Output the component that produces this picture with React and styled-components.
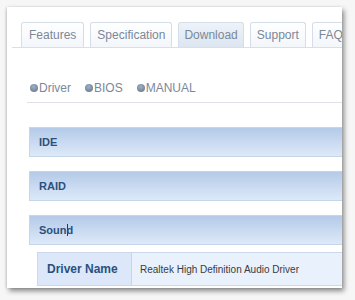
import React from "react";
import styled, { createGlobalStyle } from "styled-components";

const Global = createGlobalStyle`
  html, body { margin: 0; padding: 0; background: #f6f6f6; }
  body { font-family: "Liberation Sans", Arial, sans-serif; }
`;

const Stage = styled.div`
  width: 355px;
  height: 300px;
  padding: 7px 13px 0 7px;
  box-sizing: border-box;
  overflow: hidden;
  background: #f6f6f6;
`;

const Panel = styled.div`
  width: 335px;
  height: 281px;
  background: #fff;
  overflow: hidden;
  box-shadow: 2px 3px 5px rgba(0, 0, 0, 0.45), -1px 0 2px rgba(0, 0, 0, 0.12);
  padding: 15px 0 0 5px;
  box-sizing: border-box;
`;

const TabBar = styled.div`
  display: flex;
  gap: 6px;
  padding-left: 9px;
  border-bottom: 1px solid #d7e0ea;
  white-space: nowrap;
`;

const Tab = styled.div`
  flex: none;
  height: 24px;
  line-height: 24px;
  padding: 0 ${(p) => p.$pad}px;
  font-size: 12px;
  color: #7b8898;
  border: 1px solid #d5dde8;
  border-bottom: none;
  border-radius: 3px 3px 0 0;
  background: ${(p) =>
    p.$active
      ? "linear-gradient(#eef3f9, #dce5f0)"
      : "linear-gradient(#ffffff, #f3f6fa)"};
`;

const Links = styled.div`
  display: flex;
  gap: 14px;
  margin: 33px 0 0 15px;
  padding: 0 0 7px 3px;
  border-bottom: 1px solid #dfe3e8;
`;

const LinkItem = styled.span`
  display: flex;
  align-items: center;
  font-size: 12px;
  line-height: 14px;
  color: #7b8898;
`;

const Dot = styled.span`
  width: 8px;
  height: 8px;
  border-radius: 50%;
  background: radial-gradient(circle at 45% 35%, #9fb0c2, #5f7287);
  margin-right: 1px;
`;

const Sections = styled.div`
  margin: 24px 0 0 17px;
  display: flex;
  flex-direction: column;
  gap: 14px;
`;

const Bar = styled.div`
  height: 28px;
  display: flex;
  align-items: center;
  padding-left: 9px;
  font-size: 11px;
  font-weight: bold;
  color: #2b507d;
  border: 1px solid #c5d5ea;
  border-right: none;
  background: linear-gradient(#b4cae8, #dde9f9);
`;

const Caret = styled.span`
  display: inline-block;
  width: 1px;
  height: 12px;
  background: #2b3c50;
  vertical-align: -2px;
  margin-right: -1px;
`;

const SoundBlock = styled.div`
  display: flex;
  flex-direction: column;
`;

const Row = styled.div`
  display: flex;
  margin: 7px 0 0 8px;
  height: 32px;
  border: 1px solid #ccd9ea;
  border-right: none;
`;

const Label = styled.div`
  width: 94px;
  display: flex;
  align-items: center;
  padding-left: 9px;
  box-sizing: border-box;
  font-size: 12px;
  font-weight: bold;
  color: #2b507d;
  background: #dce8f9;
  border-right: 1px solid #c6d5e8;
`;

const Value = styled.div`
  flex: 1;
  display: flex;
  align-items: center;
  padding-left: 8px;
  font-size: 10px;
  color: #3b3b3b;
  background: #e9f1fc;
`;

export default function App() {
  const tabs = [
    { t: "Features", pad: 7 },
    { t: "Specification", pad: 6 },
    { t: "Download", pad: 5 },
    { t: "Support", pad: 6 },
    { t: "FAQ", pad: 6 },
  ];
  return (
    <>
      <Global />
      <Stage>
        <Panel>
          <TabBar>
            {tabs.map((x) => (
              <Tab key={x.t} $pad={x.pad} $active={x.t === "Download"}>
                {x.t}
              </Tab>
            ))}
          </TabBar>
          <Links>
            {["Driver", "BIOS", "MANUAL"].map((l) => (
              <LinkItem key={l}>
                <Dot />
                {l}
              </LinkItem>
            ))}
          </Links>
          <Sections>
            <Bar>IDE</Bar>
            <Bar>RAID</Bar>
            <SoundBlock>
              <Bar>
                <span>
                  Soun
                  <Caret />d
                </span>
              </Bar>
              <Row>
                <Label>Driver Name</Label>
                <Value>Realtek High Definition Audio Driver</Value>
              </Row>
            </SoundBlock>
          </Sections>
        </Panel>
      </Stage>
    </>
  );
}
